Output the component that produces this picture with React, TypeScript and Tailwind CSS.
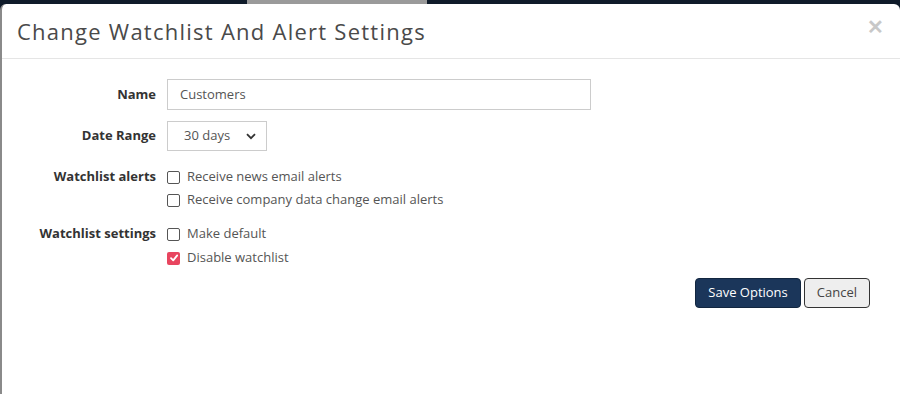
import React from "react";

const font = { fontFamily: '"Open Sans", "Liberation Sans", sans-serif' };

function Check({ checked }: { checked?: boolean }) {
  if (checked) {
    return (
      <span className="w-[13px] h-[13px] rounded-[2px] bg-[#e8455f] flex items-center justify-center shrink-0">
        <svg width="10" height="10" viewBox="0 0 10 10">
          <path d="M2 5.2 L4.2 7.4 L8.2 2.4" stroke="white" strokeWidth="1.8" fill="none" strokeLinecap="round" strokeLinejoin="round" />
        </svg>
      </span>
    );
  }
  return <span className="w-[13px] h-[13px] rounded-[2px] border border-[#555] bg-white shrink-0" />;
}

function CheckRow({ label, checked }: { label: string; checked?: boolean }) {
  return (
    <div className="flex items-center gap-[7px] h-[20px]">
      <Check checked={checked} />
      <span className="text-[13px] text-[#555]">{label}</span>
    </div>
  );
}

export default function App() {
  return (
    <div className="w-[900px] h-[394px] bg-[#0f1b2a] relative overflow-hidden" style={font}>
      <div className="h-[4px] flex">
        <div className="w-[247px]" />
        <div className="w-[180px] bg-[#9a9a9a]" />
      </div>
      <div className="h-[390px] bg-white rounded-t-[6px] border-l-2 border-[#8a8a8a] flex flex-col">
        <div className="h-[55px] flex items-center justify-between pl-[15px] pr-[16px] border-b border-[#e5e5e5]">
          <h1 className="text-[22px] text-[#4a4a4a] tracking-[1.25px]">Change Watchlist And Alert Settings</h1>
          <span className="text-[#c8c8c8] text-[20px] font-bold leading-none -mt-[8px]">✕</span>
        </div>
        <div className="flex flex-col pt-[20px]">
          <div className="grid grid-cols-[154px_1fr] gap-x-[11px] items-center">
            <div className="text-right text-[13px] font-bold text-[#333]">Name</div>
            <div>
              <div className="w-[424px] h-[31px] border border-[#ccc] flex items-center px-[12px] text-[13px] text-[#555]">Customers</div>
            </div>
          </div>
          <div className="grid grid-cols-[154px_1fr] gap-x-[11px] items-center mt-[11px]">
            <div className="text-right text-[13px] font-bold text-[#333]">Date Range</div>
            <div>
              <div className="w-[100px] h-[30px] border border-[#ccc] flex items-center justify-between pl-[16px] pr-[10px] text-[13px] text-[#555]">
                <span>30 days</span>
                <svg width="10" height="7" viewBox="0 0 10 7">
                  <path d="M1 1.2 L5 5.2 L9 1.2" stroke="#333" strokeWidth="1.8" fill="none" />
                </svg>
              </div>
            </div>
          </div>
          <div className="grid grid-cols-[154px_1fr] gap-x-[11px] mt-[16px]">
            <div className="text-right text-[13px] font-bold text-[#333] h-[20px] flex items-center justify-end">Watchlist alerts</div>
            <div className="flex flex-col gap-[3px]">
              <CheckRow label="Receive news email alerts" />
              <CheckRow label="Receive company data change email alerts" />
            </div>
          </div>
          <div className="grid grid-cols-[154px_1fr] gap-x-[11px] mt-[14px]">
            <div className="text-right text-[13px] font-bold text-[#333] h-[20px] flex items-center justify-end">Watchlist settings</div>
            <div className="flex flex-col gap-[4px]">
              <CheckRow label="Make default" />
              <CheckRow label="Disable watchlist" checked />
            </div>
          </div>
          <div className="flex justify-end gap-[3px] pr-[30px] mt-[10px]">
            <button className="h-[30px] px-[12px] rounded-[4px] bg-[#1b365a] border border-[#12263f] text-white text-[13px]">Save Options</button>
            <button className="h-[30px] px-[12px] rounded-[4px] bg-[#eeeeee] border border-[#333] text-[#444] text-[13px]">Cancel</button>
          </div>
        </div>
      </div>
    </div>
  );
}
